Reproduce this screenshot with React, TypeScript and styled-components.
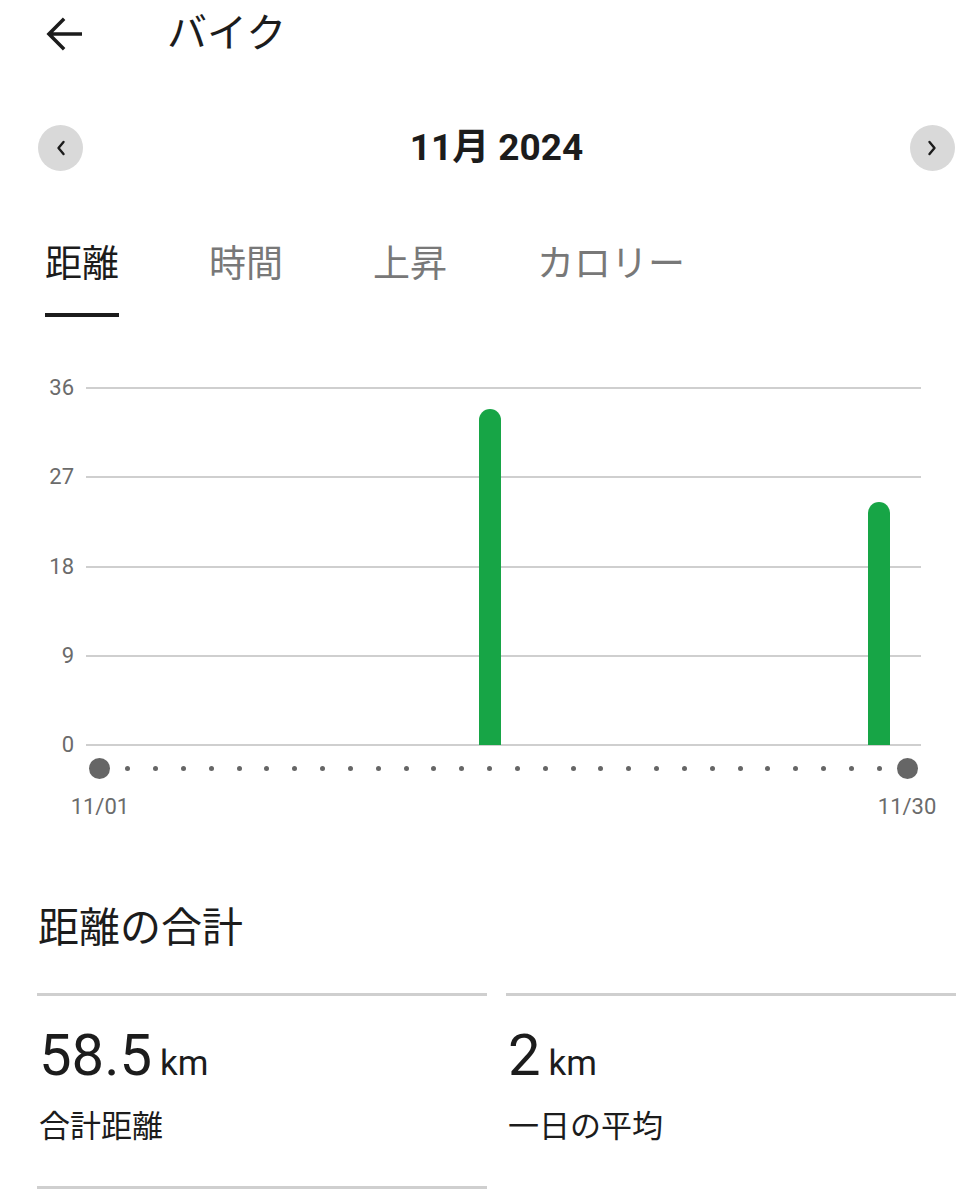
import React from "react"
import styled, { createGlobalStyle } from "styled-components"

const GlobalStyle = createGlobalStyle`
  html, body {
    margin: 0;
    padding: 0;
    background: #ffffff;
  }
  body {
    font-family: Roboto, "Noto Sans CJK JP", sans-serif;
    color: #1c1c1c;
  }
`

const Page = styled.div`
  width: 978px;
  min-height: 1200px;
  overflow: hidden;
`

const Header = styled.header`
  display: flex;
  align-items: center;
  height: 68px;
  padding-left: 45px;
`

const BackButton = styled.button`
  display: flex;
  align-items: center;
  justify-content: center;
  width: 38px;
  height: 38px;
  padding: 0;
  border: none;
  background: none;
  color: #1c1c1c;
`

const Title = styled.h1`
  margin: 0 0 0 84px;
  font-size: 40px;
  font-weight: 400;
  line-height: 48px;
`

const MonthRow = styled.div`
  display: flex;
  align-items: center;
  justify-content: space-between;
  margin-top: 57px;
  padding: 0 23px 0 38px;
`

const RoundButton = styled.button`
  display: flex;
  align-items: center;
  justify-content: center;
  width: 45px;
  height: 46px;
  padding: 0;
  border: none;
  border-radius: 50%;
  background: #d9d9d9;
  color: #1c1c1c;
`

const MonthLabel = styled.div`
  font-size: 37px;
  font-weight: 700;
  line-height: 46px;
`

const Tabs = styled.nav`
  display: flex;
  gap: 90px;
  margin-top: 72px;
  padding-left: 45px;
`

const Tab = styled.div<{ $active?: boolean }>`
  font-size: 37px;
  line-height: 44px;
  padding-bottom: 26px;
  color: ${(p) => (p.$active ? "#1c1c1c" : "#787878")};
  border-bottom: 4px solid ${(p) => (p.$active ? "#1c1c1c" : "transparent")};
`

const Chart = styled.section`
  display: grid;
  grid-template-columns: 86px 835px;
  margin-top: 61px;
`

const Layers = styled.div`
  display: grid;
  grid-column: 1 / span 2;
  grid-template-columns: 86px 835px;
`

const Lines = styled.div`
  grid-row: 1;
  grid-column: 1 / span 2;
  display: flex;
  flex-direction: column;
  justify-content: space-between;
  height: 377px;
`

const GridRow = styled.div`
  display: grid;
  grid-template-columns: 86px 835px;
  align-items: center;
  height: 20px;
`

const AxisLabel = styled.span`
  font-size: 22px;
  line-height: 20px;
  color: #6b6b6b;
  text-align: right;
  padding-right: 12px;
`

const GridLine = styled.div`
  height: 2px;
  background: #cfcfcf;
`

const Bars = styled.div`
  grid-row: 1;
  grid-column: 2;
  display: grid;
  grid-template-columns: repeat(30, minmax(0, 1fr));
  align-items: end;
  padding-bottom: 10px;
`

const BarSlot = styled.div`
  display: flex;
  justify-content: center;
`

const Bar = styled.div`
  width: 22px;
  flex: none;
  background: #17a546;
  border-radius: 11px 11px 0 0;
`

const DayRow = styled.div`
  grid-column: 2;
  display: grid;
  grid-template-columns: repeat(30, minmax(0, 1fr));
  align-items: center;
  height: 20px;
  margin-top: 3px;
`

const DotSlot = styled.div`
  display: flex;
  justify-content: center;
`

const Dot = styled.span<{ $end?: boolean }>`
  flex: none;
  width: ${(p) => (p.$end ? "21px" : "5px")};
  height: ${(p) => (p.$end ? "21px" : "5px")};
  border-radius: 50%;
  background: #666666;
`

const TickRow = styled.div`
  grid-column: 2;
  display: grid;
  grid-template-columns: repeat(30, minmax(0, 1fr));
  margin-top: 17px;
`

const Tick = styled.span<{ $col: number }>`
  grid-column: ${(p) => p.$col};
  display: flex;
  justify-content: center;
  white-space: nowrap;
  font-size: 22px;
  line-height: 24px;
  color: #6b6b6b;
`

const SectionTitle = styled.h2`
  margin: 85px 0 0 38px;
  font-size: 41px;
  font-weight: 400;
  line-height: 48px;
`

const Stats = styled.div`
  display: grid;
  grid-template-columns: 1fr 1fr;
  column-gap: 19px;
  margin-top: 41px;
  padding: 0 22px 0 37px;
`

const StatCard = styled.div`
  border-top: 3px solid #cfcfcf;
  padding: 30px 0 39px 2px;
`

const StatValue = styled.div`
  display: flex;
  align-items: baseline;
  gap: 8px;
  height: 58px;
`

const Number = styled.span`
  font-size: 58px;
  line-height: 58px;
`

const Unit = styled.span`
  font-size: 35px;
  line-height: 35px;
`

const StatLabel = styled.div`
  margin-top: 23px;
  font-size: 31px;
  line-height: 40px;
`

const BackArrow = () => (
  <svg width="36" height="36" viewBox="4 4 16 16" fill="currentColor">
    <path d="M20 11.2H7.2l5.4-5.4L11.5 4.7 4.2 12l7.3 7.3 1.1-1.1-5.4-5.4H20z" />
  </svg>
)

const Chevron = ({ dir }: { dir: "left" | "right" }) => (
  <svg width="10" height="16" viewBox="0 0 10 16" fill="none">
    <path
      d={dir === "left" ? "M7.5 2 2.5 8l5 6" : "M2.5 2l5 6-5 6"}
      stroke="currentColor"
      strokeWidth="2.4"
      strokeLinecap="round"
      strokeLinejoin="round"
    />
  </svg>
)

const MAX = 36
const PLOT_HEIGHT = 357
const distances: Record<number, number> = { 15: 33.9, 29: 24.5 }
const days = Array.from({ length: 30 }, (_, i) => i + 1)
const ticks = [36, 27, 18, 9, 0]

const App: React.FC = () => (
  <Page>
    <GlobalStyle />
    <Header>
      <BackButton aria-label="戻る">
        <BackArrow />
      </BackButton>
      <Title>バイク</Title>
    </Header>

    <MonthRow>
      <RoundButton aria-label="前の月">
        <Chevron dir="left" />
      </RoundButton>
      <MonthLabel>11月 2024</MonthLabel>
      <RoundButton aria-label="次の月">
        <Chevron dir="right" />
      </RoundButton>
    </MonthRow>

    <Tabs>
      <Tab $active>距離</Tab>
      <Tab>時間</Tab>
      <Tab>上昇</Tab>
      <Tab>カロリー</Tab>
    </Tabs>

    <Chart>
      <Layers>
        <Lines>
          {ticks.map((t) => (
            <GridRow key={t}>
              <AxisLabel>{t}</AxisLabel>
              <GridLine />
            </GridRow>
          ))}
        </Lines>
        <Bars>
          {days.map((d) => (
            <BarSlot key={d}>
              {distances[d] ? (
                <Bar style={{ height: `${(distances[d] / MAX) * PLOT_HEIGHT}px` }} />
              ) : null}
            </BarSlot>
          ))}
        </Bars>
      </Layers>
      <DayRow>
        {days.map((d) => (
          <DotSlot key={d}>
            <Dot $end={d === 1 || d === 30} />
          </DotSlot>
        ))}
      </DayRow>
      <TickRow>
        <Tick $col={1}>11/01</Tick>
        <Tick $col={30}>11/30</Tick>
      </TickRow>
    </Chart>

    <SectionTitle>距離の合計</SectionTitle>
    <Stats>
      <StatCard>
        <StatValue>
          <Number>58.5</Number>
          <Unit>km</Unit>
        </StatValue>
        <StatLabel>合計距離</StatLabel>
      </StatCard>
      <StatCard>
        <StatValue>
          <Number>2</Number>
          <Unit>km</Unit>
        </StatValue>
        <StatLabel>一日の平均</StatLabel>
      </StatCard>
      <StatCard />
    </Stats>
  </Page>
)

export default App
